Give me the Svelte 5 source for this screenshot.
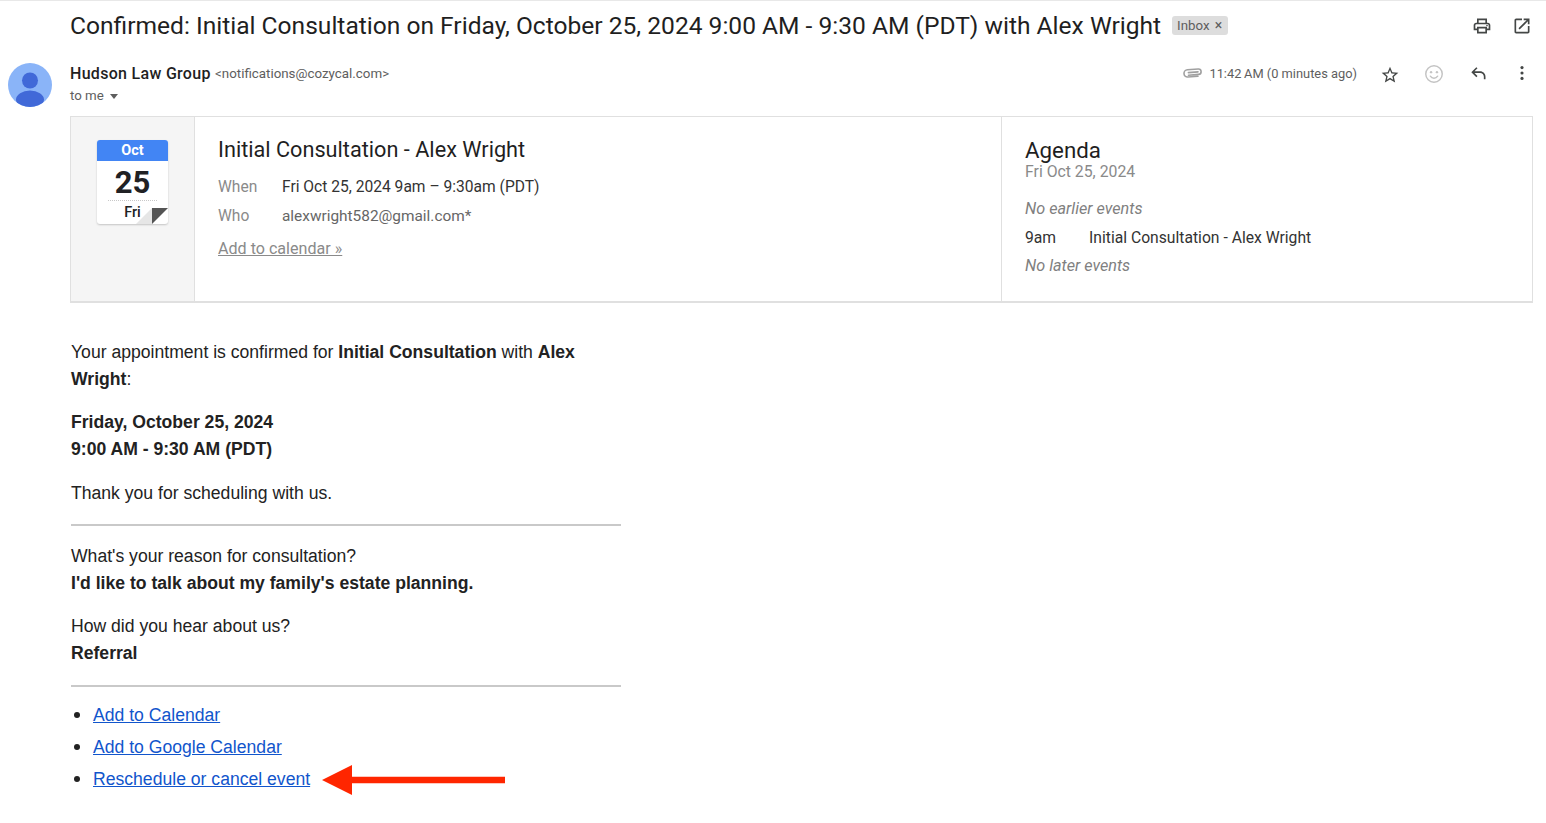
<script>
  const items = ["Add to Calendar", "Add to Google Calendar", "Reschedule or cancel event"];
</script>

<div class="page">
  <header class="subject">
    <h1>Confirmed: Initial Consultation on Friday, October 25, 2024 9:00 AM - 9:30 AM (PDT) with Alex Wright</h1>
    <span class="chip">Inbox <span class="x">×</span></span>
    <div class="subject-icons">
      <svg viewBox="0 0 24 24" width="20" height="20"><path fill="#444746" d="M19 8h-1V3H6v5H5c-1.66 0-3 1.34-3 3v6h4v4h12v-4h4v-6c0-1.66-1.34-3-3-3zM8 5h8v3H8V5zm8 14H8v-4h8v4zm2-4v-2H6v2H4v-4c0-.55.45-1 1-1h14c.55 0 1 .45 1 1v4h-2z"/><circle fill="#444746" cx="18" cy="11.5" r="1"/></svg>
      <svg viewBox="0 0 24 24" width="20" height="20"><path fill="#444746" d="M19 19H5V5h7V3H5c-1.11 0-2 .9-2 2v14c0 1.1.89 2 2 2h14c1.1 0 2-.9 2-2v-7h-2v7zM14 3v2h3.59l-9.83 9.83 1.41 1.41L19 6.41V10h2V3h-7z"/></svg>
    </div>
  </header>

  <section class="sender">
    <svg class="avatar" viewBox="0 0 44 44" width="44" height="44">
      <defs><clipPath id="av"><circle cx="22" cy="22" r="22"/></clipPath></defs>
      <circle cx="22" cy="22" r="22" fill="#8ab4f8"/>
      <g clip-path="url(#av)" fill="#4169d8">
        <circle cx="22" cy="17.5" r="8"/>
        <ellipse cx="22" cy="36.5" rx="14" ry="9"/>
      </g>
    </svg>
    <div class="who">
      <div class="from"><b>Hudson Law Group</b> <span>&lt;notifications@cozycal.com&gt;</span></div>
      <div class="tome">to me <i class="caret"></i></div>
    </div>
    <div class="meta">
      <svg class="clip" viewBox="0 0 20 12" width="20" height="12"><path fill="none" stroke="#a0a0a0" stroke-width="1.6" stroke-linecap="round" d="M5.5 8.2 15.6 7.4a2.7 2.7 0 0 0-.4-5.4L4.4 2.8a3.6 3.6 0 0 0 .4 7.2L15 9.3M5.4 5.6 15 4.9"/></svg>
      <span class="time">11:42&#8201;AM (0 minutes ago)</span>
      <div class="meta-icons">
        <svg class="star" viewBox="0 0 24 24" width="20" height="20"><path fill="#444746" d="M22 9.24l-7.19-.62L12 2 9.19 8.63 2 9.24l5.46 4.73L5.82 21 12 17.27 18.18 21l-1.63-7.03L22 9.24zM12 15.4l-3.76 2.27 1-4.28-3.32-2.88 4.38-.38L12 6.1l1.71 4.04 4.38.38-3.32 2.88 1 4.28L12 15.4z"/></svg>
        <svg class="smile" viewBox="0 0 24 24" width="22" height="22"><circle cx="12" cy="12" r="9" fill="none" stroke="#c4c4c4" stroke-width="1.6"/><circle cx="8.8" cy="10" r="1.3" fill="#c4c4c4"/><circle cx="15.2" cy="10" r="1.3" fill="#c4c4c4"/><path d="M8 14.3c1 1.6 2.4 2.3 4 2.3s3-.7 4-2.3" fill="none" stroke="#c4c4c4" stroke-width="1.5" stroke-linecap="round"/></svg>
        <svg viewBox="0 0 24 24" width="20" height="20"><path fill="#444746" d="M21 19.5h-2v-3c0-2.5-2-4.5-4.5-4.5H7.8l3.6 3.6L10 17l-6-6 6-6 1.4 1.4L7.8 10h6.7c3.6 0 6.5 2.9 6.5 6.5v3z"/></svg>
        <svg viewBox="0 0 24 24" width="20" height="20"><g fill="#444746"><circle cx="12" cy="5.5" r="1.9"/><circle cx="12" cy="12" r="1.9"/><circle cx="12" cy="18.5" r="1.9"/></g></svg>
      </div>
    </div>
  </section>

  <section class="card">
    <div class="datecol">
      <div class="cal">
        <div class="month">Oct</div>
        <div class="day">25</div>
        <div class="rule"></div>
        <div class="dow">Fri</div>
        <svg class="fold" viewBox="0 0 32 16" width="32" height="16"><path d="M0 16 16 0V16Z" fill="#e6e6e6"/><path d="M16 0H32L16 16Z" fill="#545454"/></svg>
      </div>
    </div>
    <div class="event">
      <h2>Initial Consultation - Alex Wright</h2>
      <div class="line"><span class="lab">When</span><span>Fri Oct 25, 2024 9am – 9:30am (PDT)</span></div>
      <div class="line"><span class="lab">Who</span><span class="muted">alexwright582@gmail.com*</span></div>
      <a class="addcal" href="#a">Add to calendar »</a>
    </div>
    <div class="agenda">
      <h2>Agenda</h2>
      <div class="agdate">Fri Oct 25, 2024</div>
      <div class="none">No earlier events</div>
      <div class="agrow"><span>9am</span><span>Initial Consultation - Alex Wright</span></div>
      <div class="none">No later events</div>
    </div>
  </section>

  <main class="body">
    <p>Your appointment is confirmed for <b>Initial Consultation</b> with <b>Alex Wright</b>:</p>
    <p><b>Friday, October 25, 2024<br />9:00 AM - 9:30 AM (PDT)</b></p>
    <p>Thank you for scheduling with us.</p>
    <hr />
    <p>What's your reason for consultation?<br /><b>I'd like to talk about my family's estate planning.</b></p>
    <p>How did you hear about us?<br /><b>Referral</b></p>
    <hr />
    <ul>
      {#each items as item, i}
        <li>
          <a href="#b">{item}</a>
          {#if i === 2}
            <svg class="arrow" viewBox="0 0 183 32" width="183" height="32"><path fill="#ff2600" d="M0 16 30 1V12.7H183V19.3H30V31Z"/></svg>
          {/if}
        </li>
      {/each}
    </ul>
  </main>
</div>

<style>
  :global(body) { margin: 0; background: #fff; }
  .page {
    width: 1546px; height: 823px; overflow: hidden; box-sizing: border-box;
    border-top: 1px solid #e8e8e8; color: #202124;
    font-family: Roboto, "Liberation Sans", sans-serif;
  }
  .subject { display: flex; align-items: center; height: 49px; padding: 0 14px 0 70px; }
  h1 { margin: 0; font-size: 24.57px; font-weight: 400; line-height: 49px; white-space: nowrap; color: #1f1f1f; }
  .chip {
    margin-left: 11px; height: 19px; line-height: 19px; padding: 0 5px; border-radius: 3px;
    background: #dddddd; color: #5e5e5e; font-size: 13.3px; white-space: nowrap;
  }
  .x { font-size: 14px; margin-left: 2px; margin-right: 1px; }
  .subject-icons { margin-left: auto; display: flex; gap: 20px; }
  .sender { display: flex; align-items: flex-start; height: 66px; padding-left: 8px; padding-right: 14px; }
  .avatar { margin-top: 13px; flex: none; }
  .who { margin-left: 18px; margin-top: 14px; }
  .from { font-size: 13.35px; line-height: 20px; color: #5e5e5e; }
  .from b { font-size: 16px; font-weight: 500; color: #1f1f1f; letter-spacing: .3px; }
  .from span { vertical-align: 1px; margin-left: 1px; }
  .tome { font-size: 13.3px; line-height: 20px; margin-top: 1px; color: #5e5e5e; display: flex; align-items: center; gap: 5px; }
  .caret { width: 0; height: 0; border: 4.5px solid transparent; border-top: 5px solid #5e5e5e; border-bottom: 0; margin-left: 1px; }
  .meta { margin-left: auto; margin-top: 13px; display: flex; align-items: center; height: 20px; }
  .clip { margin-right: 6px; }
  .time { font-size: 12.85px; color: #5e5e5e; }
  .meta-icons { display: flex; align-items: center; gap: 24px; margin-left: 23px; }
  .star { position: relative; top: 2px; }
  .smile { margin: 0 -1px; position: relative; top: 1px; }
  .card {
    display: flex; margin-left: 70px; width: 1463px; height: 187px; box-sizing: border-box;
    border: 1px solid #e0e0e0; border-bottom-width: 2px;
  }
  .datecol { width: 124px; flex: none; background: #f5f5f5; border-right: 1px solid #e0e0e0; padding: 23px 0 0 26px; box-sizing: border-box; }
  .cal { position: relative; width: 71px; height: 84px; background: #fff; border-radius: 3px; box-shadow: 0 1px 2px rgba(0,0,0,.2); text-align: center; }
  .month { height: 21px; line-height: 21px; background: #4285f4; color: #fff; font-size: 14.5px; font-weight: 700; border-radius: 3px 3px 0 0; }
  .day { font-size: 31px; font-weight: 700; line-height: 44px; color: #202124; margin-bottom: -5px; }
  .rule { border-top: 1px dotted #c8c8c8; margin: 0 11px; }
  .dow { font-size: 14.5px; font-weight: 500; line-height: 24px; color: #202124; }
  .fold { position: absolute; right: 0; bottom: 0; }
  .event { width: 807px; flex: none; box-sizing: border-box; border-right: 1px solid #e0e0e0; padding: 18px 0 0 23px; }
  h2 { margin: 0; font-size: 21.7px; font-weight: 400; line-height: 30px; color: #1f1f1f; }
  .agenda h2 { font-size: 22.3px; }
  .line { display: flex; font-size: 15.6px; line-height: 29px; color: #333; }
  .event h2 { margin-bottom: 8px; }
  .lab { width: 64px; color: #8a8a8a; }
  .muted { color: #666; font-size: 15.4px; }
  .addcal { display: block; margin-top: 3px; font-size: 16.1px; line-height: 30px; color: #8a8a8a; }
  .agenda { flex: 1; padding: 18px 0 0 23px; }
  .agdate { font-size: 15.8px; line-height: 14px; color: #8a8a8a; }
  .none { font-size: 16.2px; font-style: italic; line-height: 29px; color: #808080; }
  .agdate + .none { margin-top: 15px; }
  .agrow + .none { margin-top: -1px; }
  .agrow { font-size: 15.7px; line-height: 29px; color: #333; display: flex; }
  .agrow span:first-child { width: 64px; }
  .body { margin-left: 71px; width: 550px; padding-top: 36px; font-family: "Liberation Sans", Arial, sans-serif; font-size: 17.6px; line-height: 27px; color: #222; }
  .body b { font-weight: 700; }
  p { margin: 0 0 16.25px; }
  hr { border: 0; border-top: 2px solid #c9c9c9; margin: 17.25px 0 17.25px; height: 0; }
  ul { margin: -6.25px 0 0; padding: 0 0 0 22px; }
  li { height: 32px; line-height: 32px; position: relative; }
  li::marker { font-size: 20px; }
  li a { color: #1155cc; }
  .arrow { position: absolute; left: 229px; top: 2px; }
</style>
